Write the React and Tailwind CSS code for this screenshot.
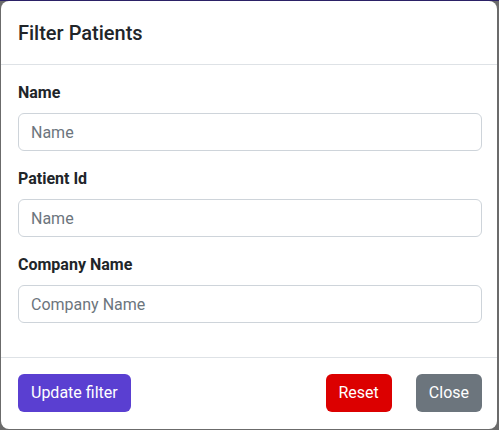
export default function App() {
  const inputCls =
    "block w-full h-[38px] px-3 rounded-md border border-[#ced4da] text-[16px] text-[#212529] placeholder:text-[#6c757d] bg-white outline-none";
  const labelCls = "block mb-2 text-[16px] leading-6 font-bold text-[#212529]";
  return (
    <div className="w-[499px] h-[430px] bg-[#6b6b6b] border-t border-[#2b2166] flex" style={{ fontFamily: "Roboto, 'Liberation Sans', sans-serif" }}>
      <div className="ml-px w-[496px] h-[428px] bg-white rounded-lg flex flex-col">
        <div className="pl-[17px] pr-[15px] pt-[17px] pb-[16px] border-b border-[#dee2e6]">
          <h5 className="text-[20px] leading-[30px] font-medium text-[#212529]">Filter Patients</h5>
        </div>
        <div className="pl-[17px] pr-[15px] pt-4 pb-[34px] border-b border-[#dee2e6]">
          <div className="mb-4">
            <label className={labelCls}>Name</label>
            <input placeholder="Name" className={inputCls} />
          </div>
          <div className="mb-4">
            <label className={labelCls}>Patient Id</label>
            <input placeholder="Name" className={inputCls} />
          </div>
          <div>
            <label className={labelCls}>Company Name</label>
            <input placeholder="Company Name" className={inputCls} />
          </div>
        </div>
        <div className="flex items-center pl-[17px] pr-[15px] pt-4 pb-4">
          <button className="h-[38px] px-[13px] rounded-md bg-[#5a3fd1] text-white text-[16px]">Update filter</button>
          <div className="flex-1" />
          <button className="h-[38px] px-[13px] rounded-md bg-[#dc0000] text-white text-[16px]">Reset</button>
          <button className="ml-6 h-[38px] px-[13px] rounded-md bg-[#6c757d] text-white text-[16px]">Close</button>
        </div>
      </div>
    </div>
  );
}
